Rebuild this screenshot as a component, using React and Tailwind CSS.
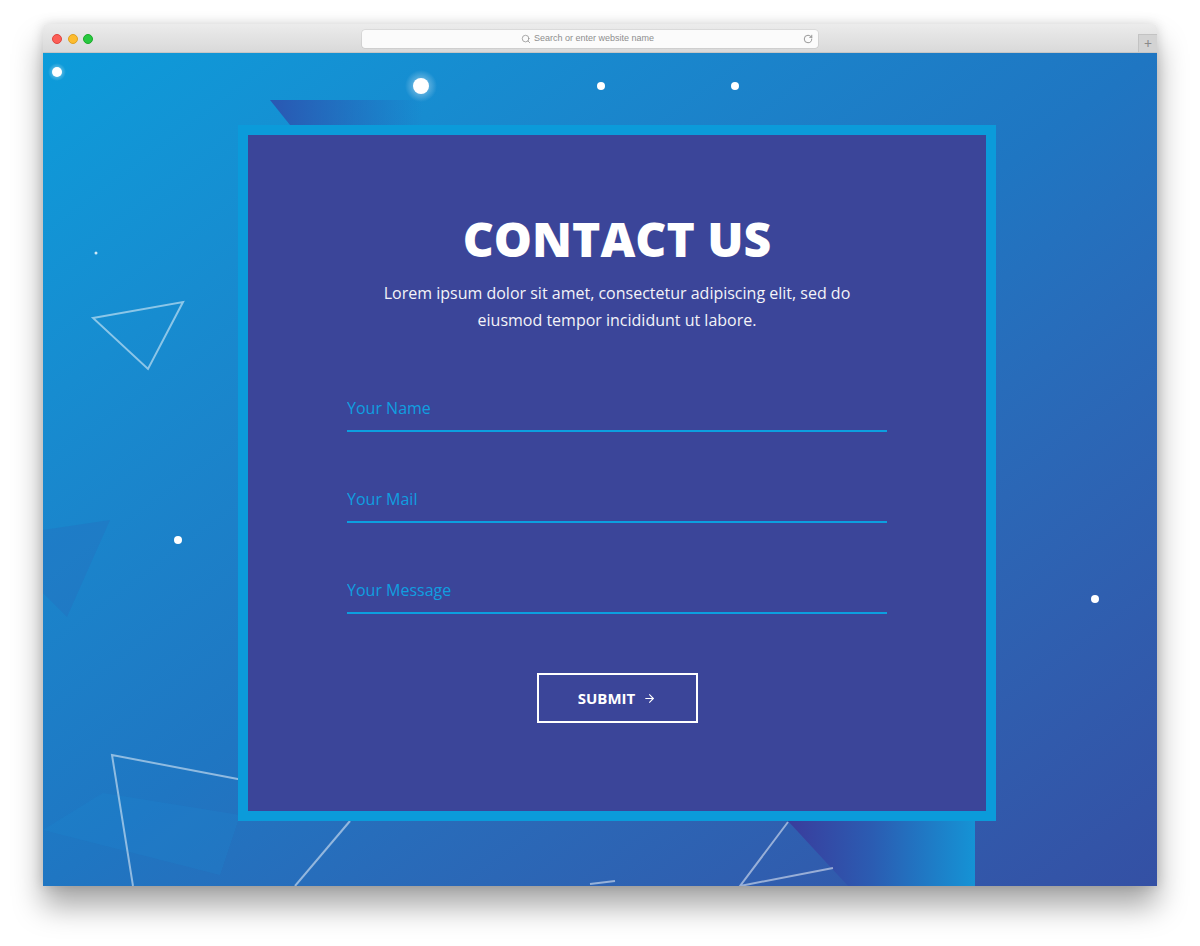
import { ArrowRight, Search, RotateCw } from "lucide-react";

function Backdrop() {
  // decorative layer: dots, outlined triangles and soft polygons
  return (
    <svg
      className="absolute inset-0 h-full w-full"
      viewBox="0 0 1114 833"
      preserveAspectRatio="none"
    >
      <defs>
        <linearGradient id="topShape" x1="0" y1="0" x2="1" y2="0">
          <stop offset="0" stopColor="#2a57b2" />
          <stop offset="1" stopColor="#2a57b2" stopOpacity="0" />
        </linearGradient>
        <linearGradient id="bottomShape" x1="0" y1="0" x2="1" y2="0">
          <stop offset="0" stopColor="#3a3c9c" />
          <stop offset="0.45" stopColor="#2b5cb2" />
          <stop offset="1" stopColor="#1593d5" />
        </linearGradient>
        <radialGradient id="glow">
          <stop offset="0" stopColor="#ffffff" stopOpacity="0.55" />
          <stop offset="1" stopColor="#ffffff" stopOpacity="0" />
        </radialGradient>
      </defs>

      <polygon points="227,47 380,47 380,72 247,72" fill="url(#topShape)" />
      <polygon points="0,477 67,467 24,564 0,540" fill="#2a64b8" opacity="0.25" />
      <polygon points="0,777 177,822 197,762 60,740" fill="#1e8fd6" opacity="0.18" />
      <polygon points="745,768 932,768 932,833 805,833" fill="url(#bottomShape)" />

      <g fill="none" stroke="#ffffff" strokeOpacity="0.5" strokeWidth="2">
        <polygon points="50,265 140,249 105,316" />
        <polyline points="200,727 69,702 90,833" />
        <line x1="307" y1="768" x2="252" y2="833" />
        <line x1="547" y1="831" x2="572" y2="828" />
        <polyline points="745,769 697,833 790,815" />
      </g>

      <circle cx="378" cy="33" r="16" fill="url(#glow)" />
      <circle cx="14" cy="19" r="9" fill="url(#glow)" />
      <g fill="#ffffff">
        <circle cx="14" cy="19" r="5" />
        <circle cx="378" cy="33" r="8" />
        <circle cx="558" cy="33" r="4" />
        <circle cx="692" cy="33" r="4" />
        <circle cx="135" cy="487" r="4" />
        <circle cx="1052" cy="546" r="4" />
        <circle cx="53" cy="200" r="1.5" opacity="0.8" />
      </g>
    </svg>
  );
}

function Field({ placeholder }) {
  return (
    <input
      type="text"
      placeholder={placeholder}
      className="block h-[46px] w-full border-b-2 border-[#0c9fe0] bg-transparent text-[16px] text-white outline-none placeholder:text-[#109fe0]"
      style={{ fontFamily: "'Open Sans', sans-serif" }}
    />
  );
}

export default function App() {
  return (
    <div className="h-[946px] w-[1200px] overflow-hidden bg-white pl-[43px] pt-[24px]">
      <div className="flex h-[862px] w-[1114px] flex-col rounded-t-[4px] shadow-[0_20px_30px_rgba(0,0,0,0.35),0_0_12px_rgba(0,0,0,0.15)]">
        {/* title bar */}
        <div className="relative flex h-[29px] items-start rounded-t-[4px] border-b border-[#c6c6c6] bg-gradient-to-b from-[#ececec] to-[#d9d9d9]">
          <div className="ml-[9px] mt-[10px] flex gap-[5.5px]">
            <span className="h-[10px] w-[10px] rounded-full bg-[#fc5f57] border border-[#e0443e]" />
            <span className="h-[10px] w-[10px] rounded-full bg-[#fdbc2e] border border-[#dea123]" />
            <span className="h-[10px] w-[10px] rounded-full bg-[#28c840] border border-[#1aab29]" />
          </div>
          <div className="ml-[269px] mt-[6px] flex h-[18px] w-[456px] items-center rounded-[3px] bg-[#fbfbfb] shadow-[0_0_0_0.5px_rgba(0,0,0,0.12)]">
            <div className="flex flex-1 items-center justify-center gap-[3px] pl-[10px] text-[9px] text-[#8e8e8e]" style={{ fontFamily: "'Liberation Sans', Arial, sans-serif" }}>
              <Search size={10} strokeWidth={1.8} />
              <span>Search or enter website name</span>
            </div>
            <RotateCw size={10} strokeWidth={1.8} className="mr-[5px] text-[#777]" />
          </div>
          <div className="absolute bottom-0 right-0 flex h-[18px] w-[19px] items-center justify-center border-l border-t border-[#c3c3c3] bg-[#d3d3d3] text-[14px] leading-none text-[#8a8a8a]">
            +
          </div>
        </div>

        {/* page */}
        <div className="relative flex-1 overflow-hidden bg-gradient-to-br from-[#0c9cda] via-[#1f76c2] to-[#3450a4]">
          <Backdrop />
          <div className="relative ml-[195px] mt-[72px] h-[696px] w-[758px] border-[10px] border-[#0b9bda] bg-[#3b4599] px-[99px] pt-[75px]" style={{ fontFamily: "'Open Sans', sans-serif" }}>
            <h1 className="text-center text-[48px] font-extrabold leading-[58px] text-white">
              CONTACT US
            </h1>
            <p className="mx-auto mt-[12px] w-[520px] text-center text-[16px] leading-[27px] text-[#f3f3f8]">
              Lorem ipsum dolor sit amet, consectetur adipiscing elit, sed do eiusmod tempor incididunt ut labore.
            </p>
            <form className="mt-[52px] flex flex-col gap-[45px]">
              <Field placeholder="Your Name" />
              <Field placeholder="Your Mail" />
              <Field placeholder="Your Message" />
            </form>
            <div className="mt-[59px] flex justify-center">
              <button className="flex h-[50px] w-[161px] items-center justify-center gap-[8px] border-2 border-white text-[15px] font-bold text-white">
                SUBMIT
                <ArrowRight size={13} strokeWidth={2} />
              </button>
            </div>
          </div>
        </div>
      </div>
    </div>
  );
}
